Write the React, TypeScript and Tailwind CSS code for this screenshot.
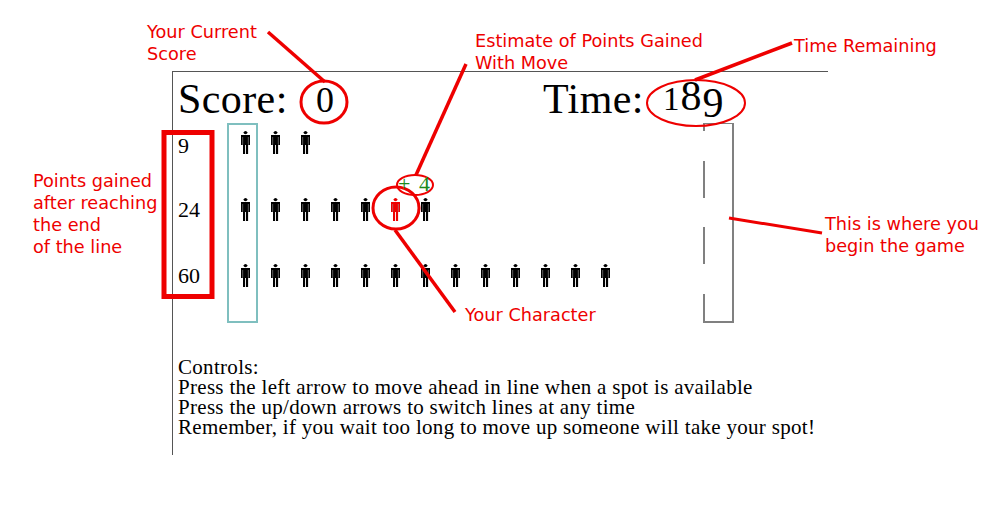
import React from 'react';

const SERIF = "font-['Liberation_Serif',serif]";

// little figure standing in line
const Person = ({ red = false }: { red?: boolean }) => {
  const main = red ? '#ee0000' : '#000000';
  return (
    <svg width="9" height="24" viewBox="0 0 9 24" className="shrink-0 block">
      <circle cx="4.5" cy="2.6" r="1.7" fill={main} />
      <rect x="2.6" y="2.2" width="3.8" height="1" fill={main} />
      <rect x="0" y="5" width="9" height="10" fill={main} />
      <rect x="1.5" y="7" width="0.6" height="8" fill="#999999" />
      <rect x="6.9" y="7" width="0.6" height="8" fill="#999999" />
      <rect x="2" y="14" width="2.1" height="10" fill={main} />
      <rect x="5" y="14" width="2.1" height="10" fill={main} />
    </svg>
  );
};

const LINES = [
  { points: '9', count: 3, rowClass: 'h-[67px]', numClass: 'pt-[4px]' },
  { points: '24', count: 7, redAt: 5, rowClass: 'h-[66px]', numClass: 'pt-[1px]' },
  { points: '60', count: 13, rowClass: 'h-[66px]', numClass: 'pt-[1px]' },
];

type LineProps = { points: string; count: number; redAt?: number; rowClass: string; numClass: string };

const Line = ({ points, count, redAt, rowClass, numClass }: LineProps) => (
  <div className={`flex items-start ${rowClass}`}>
    <div className={`w-[54px] pl-[5px] text-[22px] leading-[24px] text-black ${numClass}`}>{points}</div>
    <div className="flex gap-x-[21px] pl-[14px]">
      {Array.from({ length: count }).map((_, i) => (
        <Person key={i} red={i === redAt} />
      ))}
    </div>
  </div>
);

const Note = ({ className, children }: { className: string; children: React.ReactNode }) => (
  <div className={`absolute font-['DejaVu_Sans',sans-serif] text-[17.7px] leading-[22px] text-[#ee0000] whitespace-pre ${className}`}>
    {children}
  </div>
);

export default function App() {
  return (
    <div className="relative w-[1000px] h-[527px] overflow-hidden bg-white pl-[172px] pt-[71px]">
      {/* game */}
      <div className={`w-[656px] h-[384px] border-t border-l border-[#555555] ${SERIF}`}>
        <div className="flex h-[51px] items-end pl-[5px] text-[42px] leading-[48px] text-black">
          <span className="w-[135px] tracking-[0.4px]">Score:</span>
          <span className="w-[230px] pl-[3px] text-[36px] relative top-[1px]">0</span>
          <span className="w-[120px] tracking-[0.4px]">Time:</span>
          <span className="tracking-[1px]">
            <span className="text-[33px]">1</span>8<span className="relative top-[7px]">9</span>
          </span>
        </div>

        <div className="relative flex h-[200px]">
          <div className="w-[530px] pt-[7px]">
            {LINES.map((l) => (
              <Line key={l.points} {...l} />
            ))}
          </div>
          {/* finish column */}
          <div className="absolute left-[54px] top-0 w-[31px] h-[200px] border-2 border-[#7fbfbf]" />
          {/* start column, gaps are where the lines enter */}
          <div className="flex h-[200px] w-[31px] flex-col border-t border-r-2 border-b-2 border-[#808080]">
            <div className="h-[7px] border-l-2 border-[#808080]" />
            <div className="mt-[30px] h-[37px] border-l-2 border-[#808080]" />
            <div className="mt-[29px] h-[37px] border-l-2 border-[#808080]" />
            <div className="mt-[30px] flex-1 border-l-2 border-[#808080]" />
          </div>
        </div>

        <div className="mt-[34px] pl-[5px] text-[21px] leading-[20px] tracking-[0.3px] text-black">
          <p>Controls:</p>
          <p>Press the left arrow to move ahead in line when a spot is available</p>
          <p>Press the up/down arrows to switch lines at any time</p>
          <p>Remember, if you wait too long to move up someone will take your spot!</p>
        </div>
      </div>

      {/* annotations drawn over the game */}
      <svg width="1000" height="527" className="absolute left-0 top-0 pointer-events-none" fill="none" stroke="#ee0000">
        <path d="M268 32 L325 82" strokeWidth="3.5" />
        <ellipse cx="324" cy="102" rx="23" ry="21" strokeWidth="3" />
        <path d="M466 64 L416 175" strokeWidth="3.5" />
        <ellipse cx="415" cy="185" rx="18" ry="10" strokeWidth="2" />
        <ellipse cx="396" cy="208" rx="23" ry="21" strokeWidth="3" />
        <path d="M395 230 L455 312" strokeWidth="3.5" />
        <path d="M792 43 L695 80" strokeWidth="3.5" />
        <ellipse cx="696" cy="103" rx="49" ry="23" strokeWidth="2" />
        <path d="M729 218 L822 233" strokeWidth="3" />
        <rect x="164" y="132.5" width="48" height="164" strokeWidth="5" />
      </svg>

      <div className={`absolute left-[398px] top-[174px] text-[22px] leading-[20px] tracking-[1.5px] text-[#1a8a1a] whitespace-pre ${SERIF}`}>+ 4</div>

      <Note className="left-[147px] top-[21px]">{'Your Current\nScore'}</Note>
      <Note className="left-[475px] top-[30px]">{'Estimate of Points Gained\nWith Move'}</Note>
      <Note className="left-[794px] top-[35px]">Time Remaining</Note>
      <Note className="left-[33px] top-[170px]">{'Points gained\nafter reaching\nthe end\nof the line'}</Note>
      <Note className="left-[465px] top-[304px]">Your Character</Note>
      <Note className="left-[825px] top-[213px]">{'This is where you\nbegin the game'}</Note>
    </div>
  );
}
